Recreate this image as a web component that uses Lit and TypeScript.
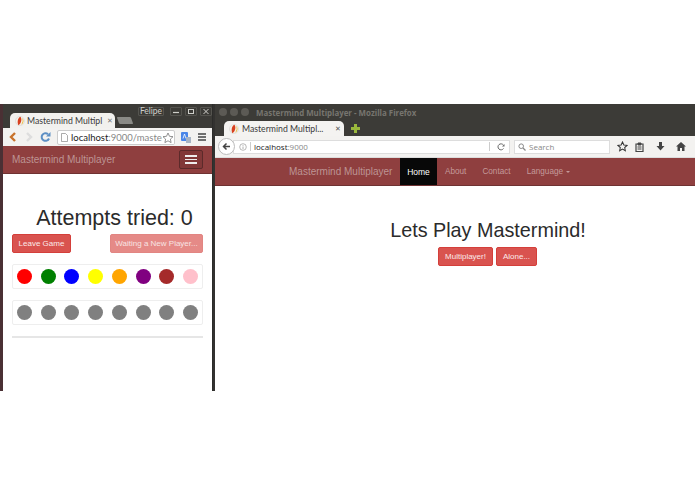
import { LitElement, html, css } from "lit";
import { customElement } from "lit/decorators.js";

const logo = html`<svg class="logo" viewBox="0 0 12 12"><circle cx="6" cy="6" r="5.500" fill="#f3f0e8" stroke="#ccc" stroke-width=".5"/><path d="M6.500 1C3 2.500 2.500 8 4 11 7 10 9 4 6.500 1Z" fill="#d8401f"/><path d="M8.500 2.500C10 5 9.500 8.500 7 10.500 10 10 11.500 5 8.500 2.500Z" fill="#e8b020"/></svg>`;

const colors = ["red", "green", "blue", "yellow", "orange", "purple", "brown", "pink"];
const greys = Array(8).fill("gray");

@customElement("app-root")
export class AppRoot extends LitElement {
  static styles = css`
    :host { display: block; width: 695px; height: 494px; background: #fff; font-family: "Liberation Sans", Arial, sans-serif; overflow: hidden; }
    * { box-sizing: border-box; }
    .desk { display: flex; margin-top: 104px; height: 287px; background: #333230; }
    .chrome { width: 213px; flex: none; display: flex; flex-direction: column; border-left: 3px solid #4a3034; border-right: 1px solid #2c2c2a; }
    .firefox { width: 480px; margin-left: 2px; flex: none; display: flex; flex-direction: column; }
    .c-title { height: 24px; background: #3c3b37; display: flex; align-items: flex-end; padding-left: 7px; position: relative; flex: none; }
    .c-tab { width: 105px; height: 15px; background: #f2f1ee; border-radius: 5px 5px 0 0; font: 8.700px Lato, sans-serif; color: #333; display: flex; align-items: center; gap: 2px; padding-left: 5px; white-space: nowrap; overflow: hidden; }
    .c-tab .t { flex: none; color: #3a3a3a; width: 75px; }
    .c-tab .x { font-size: 7px; color: #777; margin-left: 3px; flex: none; }
    .c-ghost { width: 14px; height: 7px; background: #8a8a86; margin-left: 3px; margin-bottom: 4px; transform: skewX(20deg); border-radius: 1px; }
    .c-btns { position: absolute; top: 3px; right: 0; display: flex; gap: 3px; font: 8.500px Lato, sans-serif; color: #cfcfca; }
    .c-btns span { border: 1px solid #55544f; height: 9px; display: flex; align-items: center; justify-content: center; border-radius: 1px; width: 12px; line-height: 1; }
    .c-btns span.who { width: 26px; margin-right: 3px; }
    .logo { width: 10px; height: 10px; flex: none; }
    .c-bar { height: 18px; background: #f3f2f0; display: flex; align-items: center; padding: 0 6px 0 5px; flex: none; }
    .i-fwd { margin-left: 8px; }
    .i-rel { margin-left: 6px; }
    .c-url { width: 118px; height: 15px; margin-left: 6px; background: #fff; border: 1px solid #ccc; border-radius: 2px; font: 9.500px Lato, sans-serif; color: #888; display: flex; align-items: center; padding-left: 3px; gap: 3px; white-space: nowrap; overflow: hidden; position: relative; flex: none; }
    .c-url b { font-weight: 400; color: #222; }
    .c-url svg { flex: none; }
    .c-url .star { position: absolute; right: 0; top: 1px; background: #fff; }
    .i-tr { margin-left: 6px; }
    .gap { flex: 1; }
    .nav { background: #8f3f3f; height: 28px; border-bottom: 1px solid #6f3232; display: flex; align-items: center; flex: none; }
    .nav.c { padding: 0 9px; justify-content: space-between; }
    .brand { font-size: 10px; color: #bd9494; white-space: nowrap; }
    .burger { width: 24px; height: 19px; border: 1px solid #5c2a2a; border-radius: 2px; background: #813838; display: flex; flex-direction: column; justify-content: center; align-items: center; gap: 2px; }
    .burger i { width: 12px; height: 1.500px; background: #eee; display: block; }
    .page { flex: 1; background: #fff; }
    .c-page { padding: 32px 9px 0; }
    h1 { margin: 0; font-weight: 400; color: #2b2b2b; text-align: center; white-space: nowrap; line-height: 24px; }
    .c-page h1 { font-size: 21.500px; padding-left: 14px; }
    .f-page h1 { font-size: 19.800px; }
    .btn { display: inline-flex; align-items: center; justify-content: center; height: 19px; font-size: 8px; color: #fbeaea; background: #d9534f; border: 1px solid #d43f3a; border-radius: 2px; white-space: nowrap; }
    .acts { display: flex; justify-content: space-between; margin-top: 4px; }
    .b1 { width: 59px; }
    .b2 { width: 93px; background: #e58a87; border-color: #e28582; color: #f8e4e3; }
    .well { margin-top: 11px; height: 25px; border: 1px solid #eee; border-radius: 2px; display: flex; justify-content: space-between; align-items: center; padding: 0 4px; }
    .well + .well { margin-top: 11px; }
    .dot { width: 15px; height: 15px; border-radius: 50%; }
    .rule { margin-top: 11px; height: 2px; background: #e6e6e6; }
    .f-title { height: 32px; background: #3c3b37; position: relative; flex: none; display: flex; align-items: flex-end; padding-left: 9px; }
    .f-dots { position: absolute; top: 4px; left: 4px; display: flex; gap: 3px; }
    .f-dots i { width: 8px; height: 8px; border-radius: 50%; background: #5c5a55; display: block; }
    .f-name { position: absolute; top: 3px; left: 41px; font: 700 7.900px/12px "Open Sans", sans-serif; color: #77756f; white-space: nowrap; }
    .f-tab { width: 120px; height: 15px; background: #f4f3f1; border-radius: 5px 5px 0 0; display: flex; align-items: center; gap: 3px; padding-left: 5px; font: 8.700px Lato, sans-serif; color: #3a3a3a; white-space: nowrap; }
    .f-tab .t { width: 85px; }
    .f-tab .x { margin-left: 5px; font-size: 7px; color: #555; }
    .plus { margin: 0 0 2px 6px; }
    .f-bar { height: 22px; background: #f3f2f0; display: flex; align-items: center; flex: none; padding: 0 8px 0 3px; border-bottom: 1px solid #ddd; }
    .back { width: 17px; height: 17px; border-radius: 50%; background: #fff; border: 1px solid #bbb; display: flex; align-items: center; justify-content: center; flex: none; z-index: 1; }
    .f-url { width: 277px; height: 14px; background: #fff; border: 1px solid #ddd; margin-left: -2px; display: flex; align-items: center; padding-left: 5px; gap: 3px; font: 8px "Open Sans", sans-serif; color: #888; flex: none; }
    .f-url b { font-weight: 400; color: #222; }
    .f-url .sep { width: 1px; height: 9px; background: #ccc; }
    .f-search { width: 96px; height: 14px; margin-left: 4px; background: #fff; border: 1px solid #ddd; font: 8px "Open Sans", sans-serif; color: #888; display: flex; align-items: center; gap: 3px; padding-left: 3px; flex: none; }
    .tools { display: flex; flex: 1; align-items: center; padding-left: 7px; }
    .t2 { margin-left: 7px; }
    .t3 { margin-left: 12px; }
    .t4 { margin-left: 11px; }
    .nav.f { padding-left: 74px; align-items: stretch; }
    .nav.f .brand { align-self: center; width: 111px; }
    .home { width: 37px; background: #080808; color: #fff; font-size: 8.500px; display: flex; align-items: center; justify-content: center; }
    .link { color: #c49a9a; font-size: 8.200px; align-self: center; white-space: nowrap; margin: 0 8px; }
    .caret { display: inline-block; border-top: 2px solid #c49a9a; border-left: 2px solid transparent; border-right: 2px solid transparent; vertical-align: middle; margin-left: 3px; }
    .f-page { padding: 32px 0 0 66px; display: flex; flex-direction: column; align-items: center; }
    .f-acts { display: flex; gap: 3px; margin: 5px 1px 0 0; }
    .f-acts .m { width: 55px; }
    .f-acts .a { width: 41px; }
  `;

  render() {
    return html`<div class="desk">
      <section class="chrome">
        <div class="c-title">
          <div class="c-tab">${logo}<span class="t">Mastermind Multipl</span><span class="x">✕</span></div>
          <div class="c-ghost"></div>
          <div class="c-btns">
            <span class="who">Felipe</span>
            <span><svg width="6" height="5" viewBox="0 0 6 5"><path d="M0 3.500h6" stroke="#cfcfca" stroke-width="1.200"/></svg></span>
            <span><svg width="6" height="5" viewBox="0 0 6 5"><rect x=".5" y=".5" width="5" height="4" fill="none" stroke="#cfcfca"/></svg></span>
            <span><svg width="6" height="5" viewBox="0 0 6 5"><path d="M.5 0l5 5M5.500 0l-5 5" stroke="#cfcfca"/></svg></span>
          </div>
        </div>
        <div class="c-bar">
          <svg width="9" height="12" viewBox="0 0 9 12"><path d="M7 2 3 6l4 4" fill="none" stroke="#c8722a" stroke-width="2.400"/></svg>
          <svg class="i-fwd" width="9" height="12" viewBox="0 0 9 12"><path d="M2 2l4 4-4 4" fill="none" stroke="#ddd" stroke-width="2.400"/></svg>
          <svg class="i-rel" width="11" height="12" viewBox="0 0 11 12"><path d="M9 7.500A3.800 3.800 0 1 1 8 3.200" fill="none" stroke="#5d8fc4" stroke-width="2"/><path d="M10.500 1v4.500H6Z" fill="#5d8fc4"/></svg>
          <div class="c-url">
            <svg width="7" height="9" viewBox="0 0 7 9"><path d="M.5.5h4l2 2v6h-6Z" fill="#fff" stroke="#888" stroke-width=".7"/></svg>
            <span><b>localhost</b>:9000/mastern</span>
            <svg class="star" width="12" height="12" viewBox="0 0 12 12"><path d="M6 1l1.500 3.300 3.500.4-2.600 2.400.7 3.500L6 8.800l-3.100 1.800.7-3.500L1 4.700l3.500-.4Z" fill="#fff" stroke="#666" stroke-width=".7"/></svg>
          </div>
          <svg class="i-tr" width="10" height="11" viewBox="0 0 10 11"><rect x="0" y="0" width="7" height="9" rx="1" fill="#4a86e8"/><path d="M2 6.500 3.500 2 5 6.500" fill="none" stroke="#fff" stroke-width=".8"/><rect x="5" y="5" width="5" height="6" fill="#a8b4c4"/></svg>
          <div class="gap"></div>
          <svg width="8" height="8" viewBox="0 0 8 8"><path d="M0 1h8M0 4h8M0 7h8" stroke="#444" stroke-width="1.300"/></svg>
        </div>
        <div class="nav c"><span class="brand">Mastermind Multiplayer</span><div class="burger"><i></i><i></i><i></i></div></div>
        <div class="page c-page">
          <h1>Attempts tried: 0</h1>
          <div class="acts"><span class="btn b1">Leave Game</span><span class="btn b2">Waiting a New Player...</span></div>
          <div class="well">${colors.map((c) => html`<div class="dot" style="background:${c}"></div>`)}</div>
          <div class="well">${greys.map((c) => html`<div class="dot" style="background:${c}"></div>`)}</div>
          <div class="rule"></div>
        </div>
      </section>
      <section class="firefox">
        <div class="f-title">
          <div class="f-dots"><i></i><i></i><i></i></div>
          <div class="f-name">Mastermind Multiplayer - Mozilla Firefox</div>
          <div class="f-tab">${logo}<span class="t">Mastermind Multipl...</span><span class="x">✕</span></div>
          <svg class="plus" width="11" height="11" viewBox="0 0 11 11"><path d="M4 1h3v3h3v3H7v3H4V7H1V4h3Z" fill="#9ab83c"/></svg>
        </div>
        <div class="f-bar">
          <div class="back"><svg width="9" height="9" viewBox="0 0 9 9"><path d="M8 4.500H2M4.500 1.500l-3 3 3 3" fill="none" stroke="#444" stroke-width="1.500"/></svg></div>
          <div class="f-url">
            <svg width="8" height="8" viewBox="0 0 8 8"><circle cx="4" cy="4" r="3.300" fill="none" stroke="#999" stroke-width=".7"/><path d="M4 3.500V6M4 2v.8" stroke="#999" stroke-width=".8"/></svg>
            <span class="sep"></span>
            <span><b>localhost</b>:9000</span>
            <span class="gap"></span>
            <span class="sep"></span>
            <svg style="margin:0 4px" width="8" height="8" viewBox="0 0 8 8"><path d="M6.500 5.500A3 3 0 1 1 6.500 2.200" fill="none" stroke="#666"/><path d="M7.500 1v2.500H5Z" fill="#666"/></svg>
          </div>
          <div class="f-search">
            <svg width="8" height="8" viewBox="0 0 8 8"><circle cx="3.200" cy="3.200" r="2.300" fill="none" stroke="#888"/><path d="M5 5l2.500 2.500" stroke="#888" stroke-width="1.200"/></svg>
            <span>Search</span>
          </div>
          <div class="tools">
            <svg width="11" height="11" viewBox="0 0 12 12"><path d="M6 1l1.500 3.300 3.500.4-2.600 2.400.7 3.500L6 8.800l-3.100 1.800.7-3.500L1 4.700l3.500-.4Z" fill="none" stroke="#333" stroke-width="1.100"/></svg>
            <svg class="t2" width="9" height="10" viewBox="0 0 9 10"><path d="M1 2h7v7.500H1Z" fill="none" stroke="#444" stroke-width="1.200"/><path d="M3 1h3v2H3ZM2.500 5h4M2.500 7h4" stroke="#444" fill="#444"/></svg>
            <svg class="t3" width="9" height="9" viewBox="0 0 9 9"><path d="M3 0h3v4h2.500L4.500 8.500.5 4H3Z" fill="#444"/></svg>
            <svg class="t4" width="10" height="9" viewBox="0 0 10 9"><path d="M5 0 0 4.500h1.500V9h2.500V6h2v3h2.500V4.500H10Z" fill="#444"/></svg>
          </div>
        </div>
        <div class="nav f">
          <span class="brand">Mastermind Multiplayer</span>
          <span class="home">Home</span>
          <span class="link">About</span><span class="link">Contact</span><span class="link">Language<i class="caret"></i></span>
        </div>
        <div class="page f-page">
          <h1>Lets Play Mastermind!</h1>
          <div class="f-acts"><span class="btn m">Multiplayer!</span><span class="btn a">Alone...</span></div>
        </div>
      </section>
    </div>`;
  }
}
